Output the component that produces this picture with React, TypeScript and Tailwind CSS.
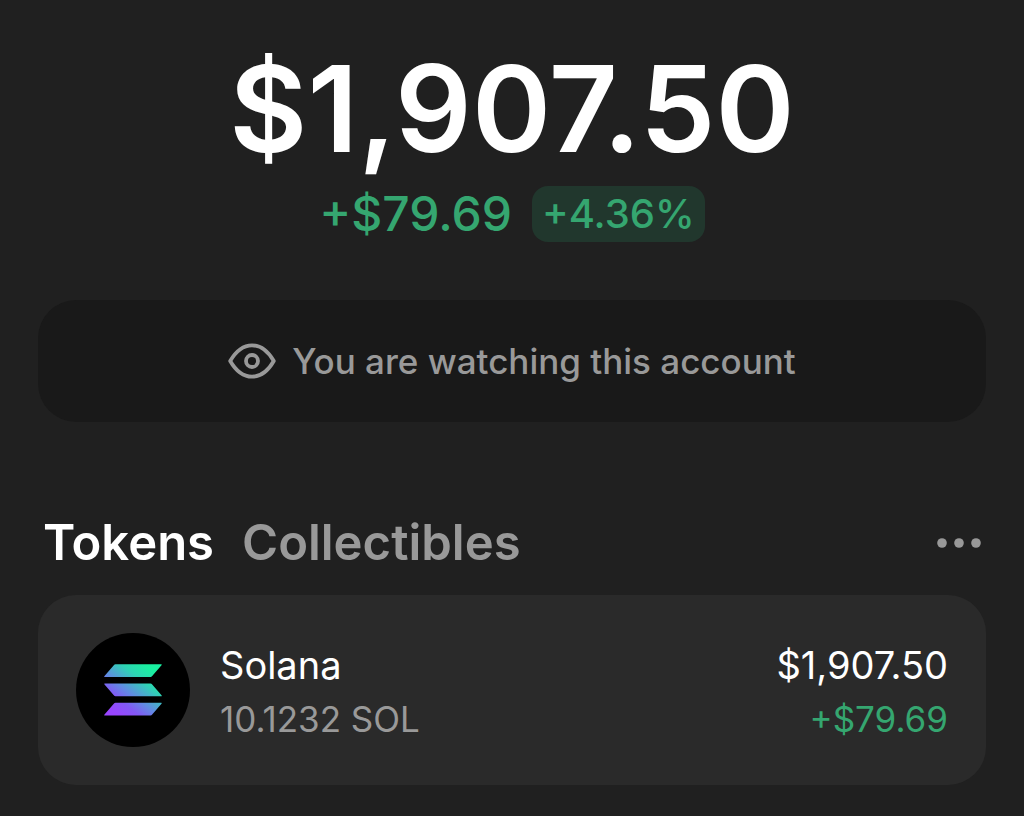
import React from "react";

const holdings = [
  { name: "Solana", amount: "10.1232 SOL", value: "$1,907.50", change: "+$79.69" },
];

function EyeIcon() {
  return (
    <svg
      className="h-9 w-12 shrink-0"
      viewBox="0 0 48 36"
      fill="none"
      stroke="currentColor"
      strokeWidth="3.8"
      strokeLinejoin="round"
      aria-hidden="true"
    >
      <path d="M2.2 18C8 8 15.500 2.300 24 2.300S40 8 45.800 18C40 28 32.500 33.700 24 33.700S8 28 2.200 18Z" />
      <circle cx="24" cy="18" r="6" />
    </svg>
  );
}

function SolanaLogo() {
  return (
    <div className="flex size-[114px] shrink-0 items-center justify-center rounded-full bg-black">
      <svg className="h-[52px] w-[58px]" viewBox="0 0 58 52" aria-hidden="true">
        <defs>
          <linearGradient id="sol" gradientUnits="userSpaceOnUse" x1="50" y1="1" x2="10" y2="52">
            <stop offset="0.08" stopColor="#19f0a0" />
            <stop offset="0.3" stopColor="#2ed3b4" />
            <stop offset="0.58" stopColor="#6388e4" />
            <stop offset="0.75" stopColor="#8259f5" />
            <stop offset="0.95" stopColor="#9945ff" />
          </linearGradient>
        </defs>
        <g fill="url(#sol)">
          <path d="M11.500 .3H57.200Q58.200 .3 57.500 1.200L48.200 12.100Q47.500 13 46.500 13H.8Q-.2 13 .5 12.100L9.800 1.200Q10.500 .3 11.500 .3Z" />
          <path d="M.8 19.500H46.500Q47.500 19.500 48.200 20.400L57.500 31.300Q58.200 32.200 57.200 32.200H11.500Q10.500 32.200 9.800 31.300L.5 20.400Q-.2 19.500 .8 19.500Z" />
          <path d="M11.500 38.800H57.200Q58.200 38.800 57.500 39.700L48.200 50.600Q47.500 51.500 46.500 51.500H.8Q-.2 51.500 .5 50.600L9.800 39.700Q10.500 38.800 11.500 38.800Z" />
        </g>
      </svg>
    </div>
  );
}

export default function App() {
  return (
    <main className="flex min-h-screen flex-col bg-[#202020] px-[38px] pt-10 font-[Inter,sans-serif] text-white">
      {/* Balance */}
      <section className="flex flex-col items-center">
        <h1 className="text-[120px] leading-[138px] font-semibold">$1,907.50</h1>
        <div className="mt-2 flex items-center gap-5 font-medium text-[#35a670]">
          <span className="text-[48px] leading-[56px]">+$79.69</span>
          <span className="rounded-2xl bg-[#21372d] px-[10px] text-[40px] leading-[56px]">+4.36%</span>
        </div>
      </section>

      <div className="mt-[58px] flex h-[122px] items-center justify-center gap-4 rounded-[38px] bg-[#191919] text-[#999999]">
        <EyeIcon />
        <p className="text-[35px] font-medium">You are watching this account</p>
      </div>

      {/* Tabs */}
      <nav className="mt-[89px] flex h-[64px] items-center gap-7 px-[5px] text-[49px] leading-[64px] font-semibold">
        <button type="button">Tokens</button>
        <button type="button" className="text-[#999999]">Collectibles</button>
        <button type="button" aria-label="More" className="ml-auto text-[#999999]">
          <svg className="h-3 w-11" viewBox="0 0 44 12" fill="currentColor" aria-hidden="true">
            <circle cx="5" cy="6" r="4.8" />
            <circle cx="22" cy="6" r="4.8" />
            <circle cx="39" cy="6" r="4.8" />
          </svg>
        </button>
      </nav>

      <ul className="mt-5">
        {holdings.map((token) => (
          <li key={token.name} className="flex items-center gap-[30px] rounded-[38px] bg-[#2a2a2a] p-[38px]">
            <SolanaLogo />
            <div className="flex-1 pt-1">
              <p className="text-[38px] leading-[54px]">{token.name}</p>
              <p className="text-[35px] leading-[54px] text-[#999999]">{token.amount}</p>
            </div>
            <div className="pt-1 text-right">
              <p className="text-[38px] leading-[54px]">{token.value}</p>
              <p className="text-[35px] leading-[54px] text-[#35a670]">{token.change}</p>
            </div>
          </li>
        ))}
      </ul>
    </main>
  );
}
